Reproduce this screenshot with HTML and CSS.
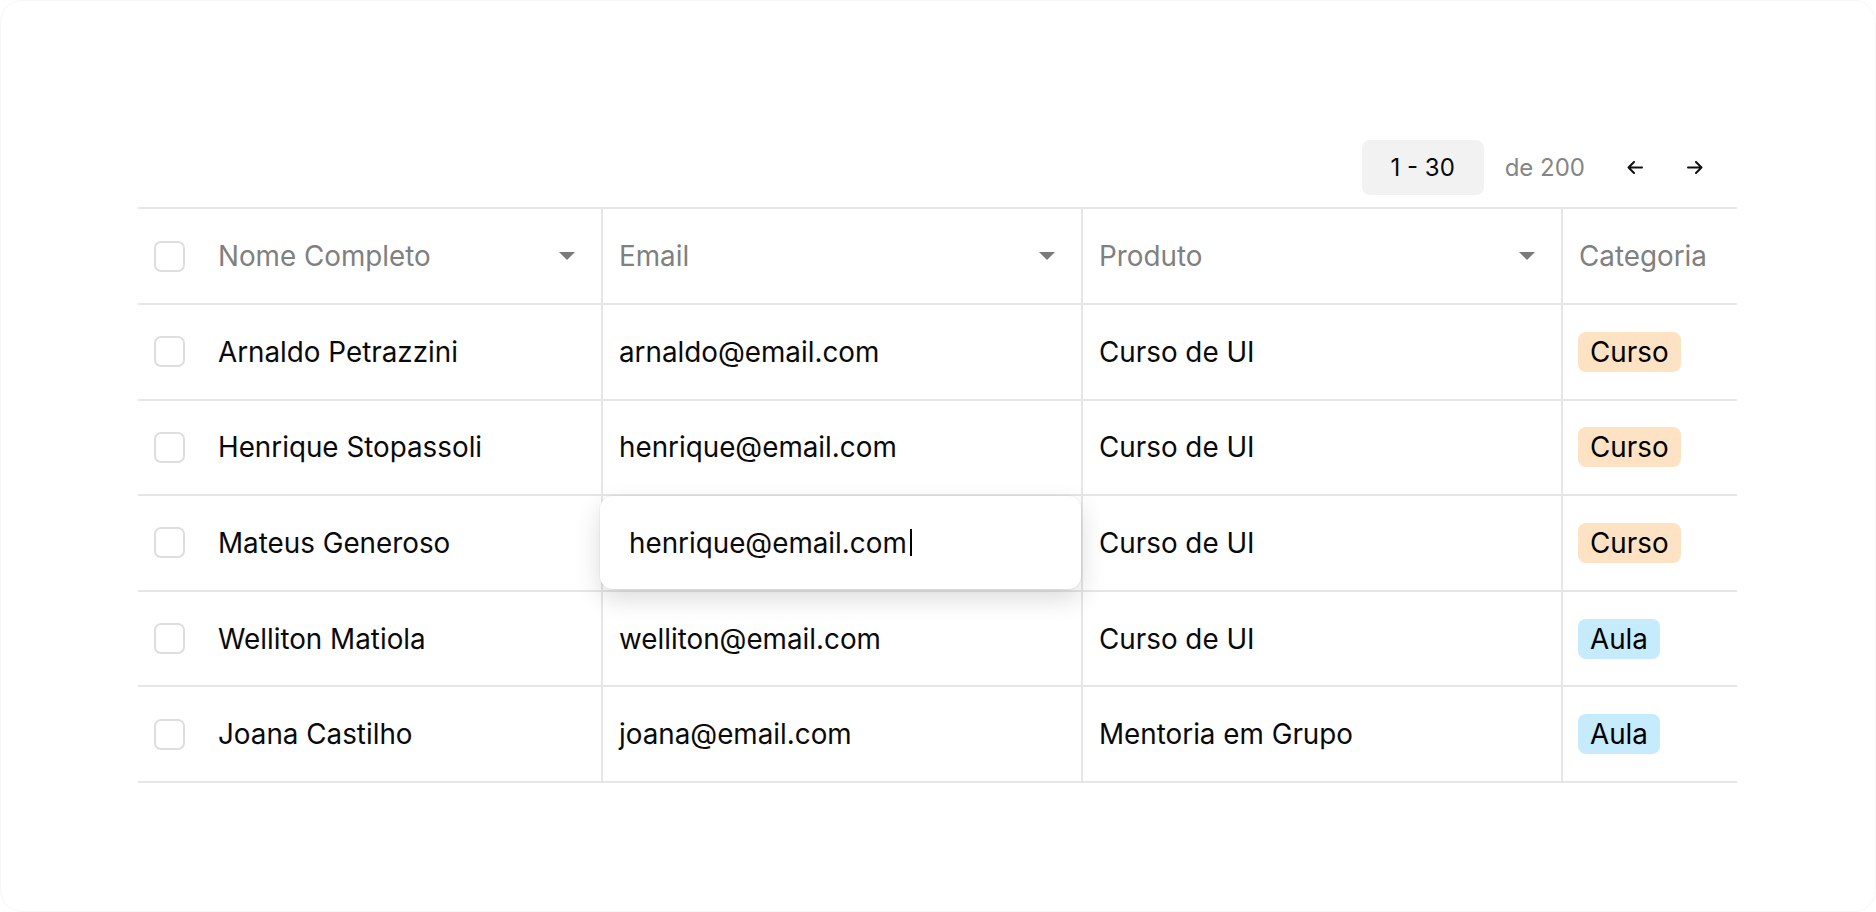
FILE: index.html
```html
<!DOCTYPE html>
<html lang="pt-BR">
<head>
    <meta charset="UTF-8">
    <meta name="viewport" content="width=device-width, initial-scale=1.0">
    <title>Alunos</title>
    <link rel="stylesheet" href="styles.css">
</head>
<body>

    <div class="frame">
        <div class="content">

            <!-- Paginação -->
            <div class="pager">
                <div class="range">1 - 30</div>
                <div class="total">de 200</div>
                <button class="arrow" aria-label="Anterior">
                    <svg width="16" height="13" viewBox="0 0 16 13" fill="none" stroke="#111" stroke-width="2" stroke-linecap="round" stroke-linejoin="round">
                        <path d="M15 6.5H1.5M7 1L1.5 6.5L7 12"/>
                    </svg>
                </button>
                <button class="arrow next" aria-label="Próximo">
                    <svg width="16" height="13" viewBox="0 0 16 13" fill="none" stroke="#111" stroke-width="2" stroke-linecap="round" stroke-linejoin="round">
                        <path d="M1 6.5H14.5M9 1L14.5 6.5L9 12"/>
                    </svg>
                </button>
            </div>

            <!-- Tabela -->
            <div class="table">
                <div class="cell head first">
                    <span class="check"></span>
                    <span class="label">Nome Completo</span>
                    <span class="caret"></span>
                </div>
                <div class="cell head">
                    <span class="label">Email</span>
                    <span class="caret"></span>
                </div>
                <div class="cell head">
                    <span class="label">Produto</span>
                    <span class="caret"></span>
                </div>
                <div class="cell head last">
                    <span class="label">Categoria</span>
                </div>

                <div class="cell first"><span class="check"></span>Arnaldo Petrazzini</div>
                <div class="cell">arnaldo@email.com</div>
                <div class="cell">Curso de UI</div>
                <div class="cell last"><span class="tag curso">Curso</span></div>

                <div class="cell first"><span class="check"></span>Henrique Stopassoli</div>
                <div class="cell">henrique@email.com</div>
                <div class="cell">Curso de UI</div>
                <div class="cell last"><span class="tag curso">Curso</span></div>

                <div class="cell first"><span class="check"></span>Mateus Generoso</div>
                <div class="cell editing">
                    <div class="editor">henrique@email.com<span class="caret-line"></span></div>
                </div>
                <div class="cell">Curso de UI</div>
                <div class="cell last"><span class="tag curso">Curso</span></div>

                <div class="cell first"><span class="check"></span>Welliton Matiola</div>
                <div class="cell">welliton@email.com</div>
                <div class="cell">Curso de UI</div>
                <div class="cell last"><span class="tag aula">Aula</span></div>

                <div class="cell first"><span class="check"></span>Joana Castilho</div>
                <div class="cell">joana@email.com</div>
                <div class="cell">Mentoria em Grupo</div>
                <div class="cell last"><span class="tag aula">Aula</span></div>
            </div>

        </div>
    </div>

</body>
</html>
```

FILE: styles.css
```css
body {
    margin: 0;
    padding: 0;
    background-color: #ffffff;
    font-family: Inter, "Noto Sans", sans-serif;
    color: #0a0a0a;
}

.frame {
    width: 1876px;
    height: 912px;
    box-sizing: border-box;
    border: 1px solid #f6f6f6;
    border-radius: 22px;
    overflow: hidden;
}

.content {
    width: 1599px;
    padding: 139px 0 0 137px;
}

/* Paginação */
.pager {
    display: flex;
    justify-content: flex-end;
    align-items: center;
    height: 55px;
    padding-right: 22px;
    margin-bottom: 12px;
}

.range {
    width: 122px;
    height: 55px;
    background-color: #f2f2f2;
    border-radius: 8px;
    display: flex;
    align-items: center;
    justify-content: center;
    font-size: 24px;
}

.total {
    margin-left: 21px;
    margin-right: 30px;
    font-size: 24px;
    color: #858585;
}

.arrow {
    width: 40px;
    height: 40px;
    padding: 0;
    border: none;
    background: none;
    display: flex;
    align-items: center;
    justify-content: center;
    cursor: pointer;
}

.arrow.next {
    margin-left: 20px;
}

/* Tabela */
.table {
    display: grid;
    grid-template-columns: 465px 480px 480px 1fr;
    grid-template-rows: 96px;
    grid-auto-rows: 95.6px;
    border-top: 2px solid #e6e6e6;
}

.cell {
    position: relative;
    display: flex;
    align-items: center;
    box-sizing: border-box;
    padding: 0 16px;
    border-bottom: 2px solid #e6e6e6;
    border-right: 2px solid #e6e6e6;
    font-size: 27.8px;
    white-space: nowrap;
}

.cell.last {
    border-right: none;
    padding-left: 15px;
}

.cell.head {
    color: #808080;
    padding-right: 26px;
}

.cell.head .label {
    flex: 1;
}

.head.last .label {
    margin-left: 1px;
}

.check {
    width: 31px;
    height: 31px;
    box-sizing: border-box;
    border: 2px solid #dedede;
    border-radius: 7px;
    margin-right: 33px;
    flex-shrink: 0;
}

.caret {
    width: 0;
    height: 0;
    border-left: 8px solid transparent;
    border-right: 8px solid transparent;
    border-top: 8px solid #7a7a7a;
}

.tag {
    display: inline-block;
    height: 40px;
    line-height: 40px;
    padding: 0 12px;
    border-radius: 8px;
    color: #000;
}

.tag.curso {
    background-color: #fde3c4;
}

.tag.aula {
    background-color: #c6ebfc;
}

/* Campo em edição */
.editor {
    position: absolute;
    left: -3px;
    top: 0;
    width: 481px;
    height: 93px;
    box-sizing: border-box;
    padding-left: 29px;
    display: flex;
    align-items: center;
    background-color: #ffffff;
    border-radius: 13px;
    box-shadow: 0 0 0 1px rgba(0, 0, 0, 0.03), 0 10px 26px rgba(0, 0, 0, 0.14);
    z-index: 2;
}

.caret-line {
    display: inline-block;
    width: 2px;
    height: 27px;
    margin-left: 3px;
    background-color: #000;
}
```
